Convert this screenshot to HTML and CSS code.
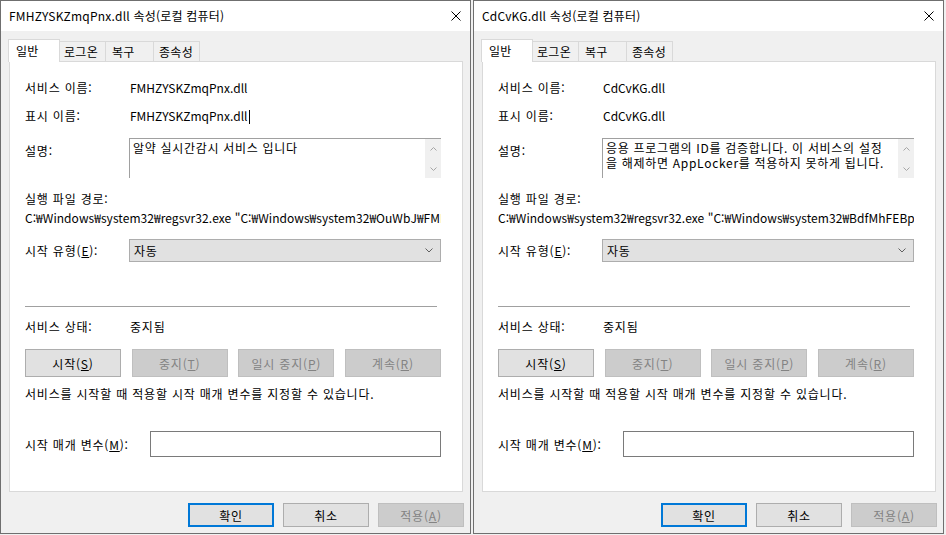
FILE: index.html
```html
<!DOCTYPE html>
<html lang="ko">

<head>
  <meta charset="UTF-8">
  <meta name="viewport" content="width=device-width, initial-scale=1.0">
  <title>서비스 속성</title>
  <link rel="stylesheet" href="styles.css">
</head>

<body>
  <div class="desktop">

    <section class="dialog">
      <div class="titlebar">
        <span class="title">FMHZYSKZmqPnx.dll 속성(로컬 컴퓨터)</span>
        <svg class="close" width="10" height="10" viewBox="0 0 10 10"><path d="M0.5 0.5L9.5 9.5M9.5 0.5L0.5 9.5" stroke="#000" stroke-width="1" fill="none"/></svg>
      </div>
      <div class="body">
        <div class="tabs">
          <div class="tab active tab-general">일반</div>
          <div class="tab tab-logon">로그온</div>
          <div class="tab tab-recovery">복구</div>
          <div class="tab tab-deps">종속성</div>
        </div>
        <div class="panel">
          <div class="row row-name">
            <span class="label">서비스 이름:</span>
            <span class="value latin">FMHZYSKZmqPnx.dll</span>
          </div>
          <div class="row row-display">
            <span class="label">표시 이름:</span>
            <span class="value latin">FMHZYSKZmqPnx.dll<span class="caret"></span></span>
          </div>
          <div class="row row-desc">
            <span class="label">설명:</span>
            <div class="memo">
              <div class="memo-text">알약 실시간감시 서비스 입니다</div>
              <div class="memo-scroll">
                <svg width="7" height="4" viewBox="0 0 7 4"><path d="M0.5 3.5L3.5 0.5L6.5 3.5" stroke="#a6a6a6" fill="none"/></svg>
                <svg width="7" height="4" viewBox="0 0 7 4"><path d="M0.5 0.5L3.5 3.5L6.5 0.5" stroke="#a6a6a6" fill="none"/></svg>
              </div>
            </div>
          </div>
          <div class="path-label">실행 파일 경로:</div>
          <div class="path">C:₩Windows₩system32₩regsvr32.exe "C:₩Windows₩system32₩OuWbJ₩FMHZYSKZmqPnx.dll"</div>
          <div class="row row-startup">
            <span class="label">시작 유형(<u>E</u>):</span>
            <div class="combo">
              <span>자동</span>
              <svg width="8" height="5" viewBox="0 0 8 5"><path d="M0.5 0.5L4 4L7.5 0.5" stroke="#606060" fill="none"/></svg>
            </div>
          </div>
          <div class="sep"></div>
          <div class="row row-status">
            <span class="label">서비스 상태:</span>
            <span class="value">중지됨</span>
          </div>
          <div class="svc-buttons">
            <div class="btn">시작(<u>S</u>)</div>
            <div class="btn disabled">중지(<u>T</u>)</div>
            <div class="btn disabled">일시 중지(<u>P</u>)</div>
            <div class="btn disabled">계속(<u>R</u>)</div>
          </div>
          <div class="hint">서비스를 시작할 때 적용할 시작 매개 변수를 지정할 수 있습니다.</div>
          <div class="row row-params">
            <span class="label">시작 매개 변수(<u>M</u>):</span>
            <div class="input"></div>
          </div>
        </div>
        <div class="footer">
          <div class="btn default">확인</div>
          <div class="btn">취소</div>
          <div class="btn disabled">적용(<u>A</u>)</div>
        </div>
      </div>
    </section>

    <section class="dialog">
      <div class="titlebar">
        <span class="title">CdCvKG.dll 속성(로컬 컴퓨터)</span>
        <svg class="close" width="10" height="10" viewBox="0 0 10 10"><path d="M0.5 0.5L9.5 9.5M9.5 0.5L0.5 9.5" stroke="#000" stroke-width="1" fill="none"/></svg>
      </div>
      <div class="body">
        <div class="tabs">
          <div class="tab active tab-general">일반</div>
          <div class="tab tab-logon">로그온</div>
          <div class="tab tab-recovery">복구</div>
          <div class="tab tab-deps">종속성</div>
        </div>
        <div class="panel">
          <div class="row row-name">
            <span class="label">서비스 이름:</span>
            <span class="value latin">CdCvKG.dll</span>
          </div>
          <div class="row row-display">
            <span class="label">표시 이름:</span>
            <span class="value latin">CdCvKG.dll</span>
          </div>
          <div class="row row-desc">
            <span class="label">설명:</span>
            <div class="memo">
              <div class="memo-text">응용 프로그램의 ID를 검증합니다. 이 서비스의 설정<br>을 해제하면 AppLocker를 적용하지 못하게 됩니다.</div>
              <div class="memo-scroll">
                <svg width="7" height="4" viewBox="0 0 7 4"><path d="M0.5 3.5L3.5 0.5L6.5 3.5" stroke="#a6a6a6" fill="none"/></svg>
                <svg width="7" height="4" viewBox="0 0 7 4"><path d="M0.5 0.5L3.5 3.5L6.5 0.5" stroke="#a6a6a6" fill="none"/></svg>
              </div>
            </div>
          </div>
          <div class="path-label">실행 파일 경로:</div>
          <div class="path">C:₩Windows₩system32₩regsvr32.exe "C:₩Windows₩system32₩BdfMhFEBpv₩CdCvKG.dll"</div>
          <div class="row row-startup">
            <span class="label">시작 유형(<u>E</u>):</span>
            <div class="combo">
              <span>자동</span>
              <svg width="8" height="5" viewBox="0 0 8 5"><path d="M0.5 0.5L4 4L7.5 0.5" stroke="#606060" fill="none"/></svg>
            </div>
          </div>
          <div class="sep"></div>
          <div class="row row-status">
            <span class="label">서비스 상태:</span>
            <span class="value">중지됨</span>
          </div>
          <div class="svc-buttons">
            <div class="btn">시작(<u>S</u>)</div>
            <div class="btn disabled">중지(<u>T</u>)</div>
            <div class="btn disabled">일시 중지(<u>P</u>)</div>
            <div class="btn disabled">계속(<u>R</u>)</div>
          </div>
          <div class="hint">서비스를 시작할 때 적용할 시작 매개 변수를 지정할 수 있습니다.</div>
          <div class="row row-params">
            <span class="label">시작 매개 변수(<u>M</u>):</span>
            <div class="input"></div>
          </div>
        </div>
        <div class="footer">
          <div class="btn default">확인</div>
          <div class="btn">취소</div>
          <div class="btn disabled">적용(<u>A</u>)</div>
        </div>
      </div>
    </section>

  </div>
</body>

</html>
```

FILE: styles.css
```css
* {
  box-sizing: border-box;
}

body {
  margin: 0;
  background: #f0f0f0;
  font-family: "Noto Sans CJK KR", "Noto Sans", sans-serif;
  font-size: 12px;
  letter-spacing: 0.8px; /* 맑은 고딕 한글 폭에 맞춤 */
  color: #000;
}

.latin {
  letter-spacing: 0;
}

.desktop {
  display: flex;
  gap: 2px;
}

.dialog {
  width: 471px;
  height: 534px;
  border: 1px solid #6f6f6f;
  background: #f0f0f0;
  display: flex;
  flex-direction: column;
}

.titlebar {
  height: 30px;
  background: #fff;
  display: flex;
  align-items: center;
  justify-content: space-between;
  padding: 0 9px 0 8px;
}

.title {
  line-height: 16px;
  letter-spacing: 0.2px;
}

.body {
  padding: 8px 7px 0 8px;
}

/* tabs */
.tabs {
  display: flex;
  align-items: flex-end;
  height: 22px;
}

.tab {
  height: 20px;
  line-height: 19px;
  border: 1px solid #d9d9d9;
  border-bottom: none;
  border-right: none;
  background: #f0f0f0;
  letter-spacing: 0.3px;
}

.tab.active {
  height: 23px;
  margin-bottom: -1px;
  margin-left: -1px;
  border-right: 1px solid #d9d9d9;
  background: #fff;
  position: relative;
  z-index: 1;
  line-height: 21px;
}

.tab-general {
  width: 52px;
  padding-left: 7px;
}

.tab-logon {
  width: 46px;
  padding-left: 4px;
  margin-left: -1px;
}

.tab-recovery {
  width: 48px;
  padding-left: 6px;
}

.tab-deps {
  width: 47px;
  padding-left: 5px;
  border-right: 1px solid #d9d9d9;
}

.panel {
  height: 431px;
  border: 1px solid #d9d9d9;
  background: #fff;
  padding: 15px 21px 0 15px;
}

.row {
  display: flex;
  align-items: center;
}

.label {
  width: 105px;
  flex: none;
}

.row-name,
.row-display,
.row-status {
  height: 20px;
}

.row-display {
  margin-top: 8px;
}

.caret {
  display: inline-block;
  width: 1px;
  height: 14px;
  background: #000;
  margin-left: 1px;
  vertical-align: -3px;
}

.row-desc {
  margin-top: 13px;
  align-items: flex-start;
}

.row-desc .label {
  margin-top: 4px;
}

.memo {
  width: 312px;
  height: 40px;
  margin-left: -1px;
  border-top: 1px solid #a0a0a0;
  border-left: 1px solid #a0a0a0;
  display: flex;
}

.memo-text {
  flex: 1;
  padding: 1px 0 0 3px;
  line-height: 15px;
  letter-spacing: 0.7px;
  white-space: nowrap;
  overflow: hidden;
}

.memo-scroll {
  width: 16px;
  background: #f0f0f0;
  display: flex;
  flex-direction: column;
  align-items: center;
  justify-content: space-between;
  padding: 8px 0 7px;
}

.path-label {
  margin-top: 12px;
  line-height: 18px;
}

.path {
  margin-top: 1px;
  line-height: 18px;
  letter-spacing: 0.05px;
  white-space: nowrap;
  overflow: hidden;
}

.row-startup {
  margin-top: 12px;
}

.combo {
  width: 312px;
  height: 23px;
  margin-left: -1px;
  background: #e1e1e1;
  border: 1px solid #adadad;
  display: flex;
  align-items: center;
  justify-content: space-between;
  padding: 0 7px 0 4px;
}

.sep {
  margin: 44px 4px 0 0;
  border-top: 1px solid #a0a0a0;
}

.row-status {
  margin-top: 9px;
}

.svc-buttons {
  display: flex;
  justify-content: space-between;
  margin-top: 13px;
}

.btn {
  height: 24px;
  width: 86px;
  background: #e1e1e1;
  border: 1px solid #adadad;
  display: flex;
  align-items: center;
  justify-content: center;
}

.svc-buttons .btn {
  width: 96px;
  height: 28px;
}

.btn.disabled {
  background: #cccccc;
  border-color: #bfbfbf;
  color: #838383;
}

.btn.default {
  border: 2px solid #0078d7;
}

.hint {
  margin-top: 7px;
  line-height: 20px;
}

.row-params {
  margin-top: 27px;
}

.row-params .label {
  width: 125px;
}

.input {
  flex: 1;
  height: 26px;
  border: 1px solid #7a7a7a;
  background: #fff;
}

.footer {
  display: flex;
  justify-content: flex-end;
  gap: 9px;
  margin: 11px -1px 0 0;
}
```
